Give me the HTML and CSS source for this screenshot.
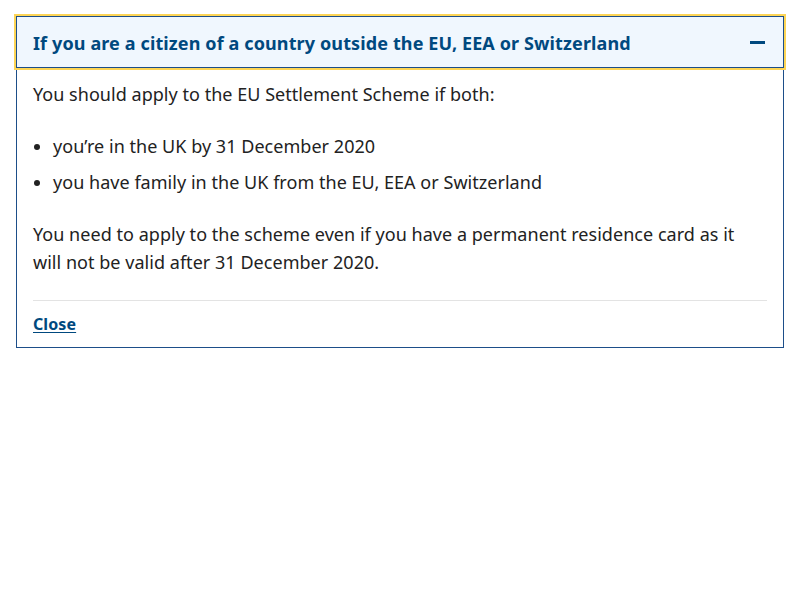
FILE: index.html
```html
<!DOCTYPE html>
<html lang="en">
<head>
<meta charset="utf-8">
<title>EU Settlement Scheme</title>
<link rel="stylesheet" href="styles.css">
</head>
<body>
<div class="details">
  <div class="details-header">
    <h2 class="details-title">If you are a citizen of a country outside the EU, EEA or Switzerland</h2>
    <span class="minus" aria-hidden="true"></span>
  </div>
  <div class="details-body">
    <p class="lead">You should apply to the EU Settlement Scheme if both:</p>
    <ul class="list">
      <li>you’re in the UK by 31 December 2020</li>
      <li>you have family in the UK from the EU, EEA or Switzerland</li>
    </ul>
    <p class="para">You need to apply to the scheme even if you have a permanent residence card as it will not be valid after 31 December 2020.</p>
    <div class="divider"></div>
    <a class="close" href="#">Close</a>
  </div>
</div>
</body>
</html>
```

FILE: styles.css
```css
html, body {
  margin: 0;
  padding: 0;
  background: #ffffff;
}

body {
  padding: 16px;
  font-family: "Noto Sans", "Open Sans", sans-serif;
  font-size: 18px;
  line-height: 28px;
  letter-spacing: 0.035px;
  color: #222222;
}

.details {
  border: 1px solid #1d4e89;
  display: flex;
  flex-direction: column;
}

.details-header {
  margin: -1px -1px 0;
  border: 1px solid #1d4e89;
  outline: 2px solid #fdd556;
  background: #f0f7fe;
  padding: 12px 18px 10px 16px;
  display: flex;
  align-items: center;
  justify-content: space-between;
}

.details-title {
  margin: 0;
  font-size: 18px;
  line-height: 28px;
  font-weight: 700;
  letter-spacing: 0.12px;
  color: #00497f;
}

.minus {
  width: 15px;
  height: 3px;
  background: #00497f;
  flex: none;
  margin-bottom: 1px;
}

.details-body {
  padding: 0 16px 9px;
  display: flex;
  flex-direction: column;
}

.lead {
  margin: 12px 0 0;
}

.list {
  margin: 24px 0 0;
  padding-left: 20px;
  display: flex;
  flex-direction: column;
  gap: 8px;
}

.para {
  margin: 24px 0 0;
}

.divider {
  margin-top: 24px;
  height: 1px;
  background: #e3e3e3;
}

.close {
  margin-top: 9px;
  align-self: flex-start;
  font-size: 16px;
  font-weight: 700;
  letter-spacing: 0.1px;
  color: #00497f;
  text-decoration: underline;
  text-underline-offset: 2px;
}
```
